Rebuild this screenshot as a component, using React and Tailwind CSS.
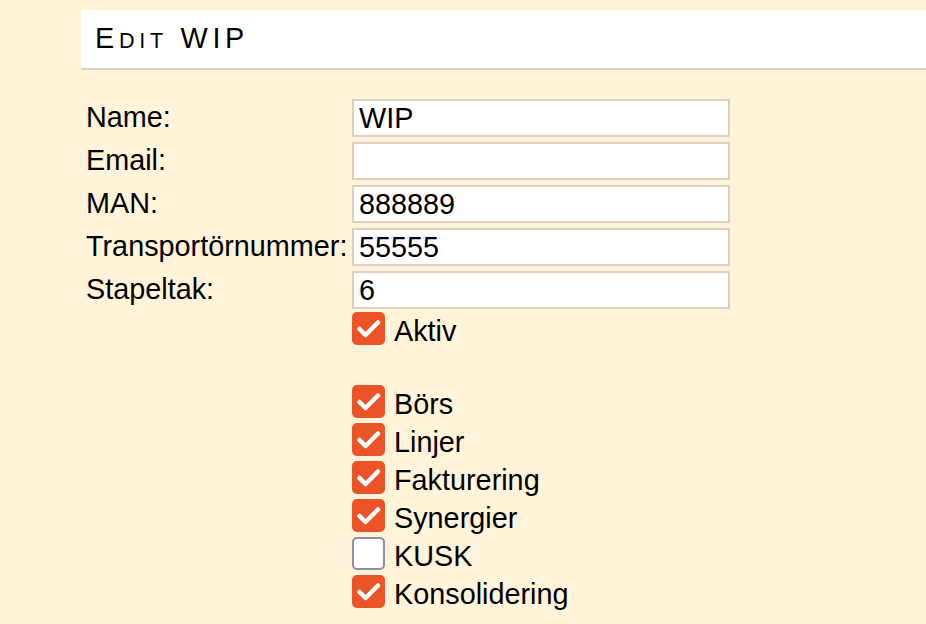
import React, { useState } from "react";

const fields = [
  { label: "Name:", value: "WIP" },
  { label: "Email:", value: "" },
  { label: "MAN:", value: "888889" },
  { label: "Transportörnummer:", value: "55555" },
  { label: "Stapeltak:", value: "6" },
];

const flags = [
  { label: "Börs", checked: true },
  { label: "Linjer", checked: true },
  { label: "Fakturering", checked: true },
  { label: "Synergier", checked: true },
  { label: "KUSK", checked: false },
  { label: "Konsolidering", checked: true },
];

const Check = ({ checked }) =>
  checked ? (
    <span className="w-[33px] h-[33px] rounded-[5px] bg-[#ea5427] flex items-center justify-center shrink-0">
      <svg width="33" height="33" viewBox="0 0 33 33">
        <path d="M7.5 17 L13.5 23 L26 10.5" fill="none" stroke="white" strokeWidth="4.5" strokeLinecap="round" strokeLinejoin="round" />
      </svg>
    </span>
  ) : (
    <span className="w-[33px] h-[33px] rounded-[5px] bg-white border-2 border-[#8f8f9d] shrink-0" />
  );

const CheckRow = ({ label, checked }) => (
  <div className="h-[38px] flex items-center gap-[9px]">
    <Check checked={checked} />
    <span className="pt-[7px]">{label}</span>
  </div>
);

const App = () => {
  const [values] = useState(fields);

  return (
    <div className="min-h-screen w-[926px] h-[624px] overflow-hidden bg-[#fff3d9] text-black font-['Liberation_Sans',Arial,sans-serif] text-[28.8px] leading-[1.15]">
      <div className="pt-[10px] pl-[81px]">
        {/* header, small caps done by hand */}
        <div className="h-[60px] bg-white border-b-2 border-[#ddcfbf] flex items-center px-[14px] pb-[2px]">
          <h1 className="tracking-[4.7px] text-[28.8px] font-normal leading-none">
            E<span className="text-[21.6px]">DIT</span> WIP
          </h1>
        </div>

        {/* form */}
        <div className="pl-[5px] pt-[29px] flex flex-col gap-[5px]">
          {values.map((f) => (
            <div key={f.label} className="flex items-center h-[38px]">
              <span className="w-[266px] shrink-0">{f.label}</span>
              <div className="w-[378px] h-[38px] bg-white border-2 border-[#e0cfbb] px-[5px] flex items-center pt-[1px]">
                {f.value}
              </div>
            </div>
          ))}
        </div>

        <div className="pl-[271px]">
          <CheckRow label="Aktiv" checked />
          <div className="h-[35px]" />
          {flags.map((f) => (
            <CheckRow key={f.label} {...f} />
          ))}
        </div>
      </div>
    </div>
  );
};

export default App;
